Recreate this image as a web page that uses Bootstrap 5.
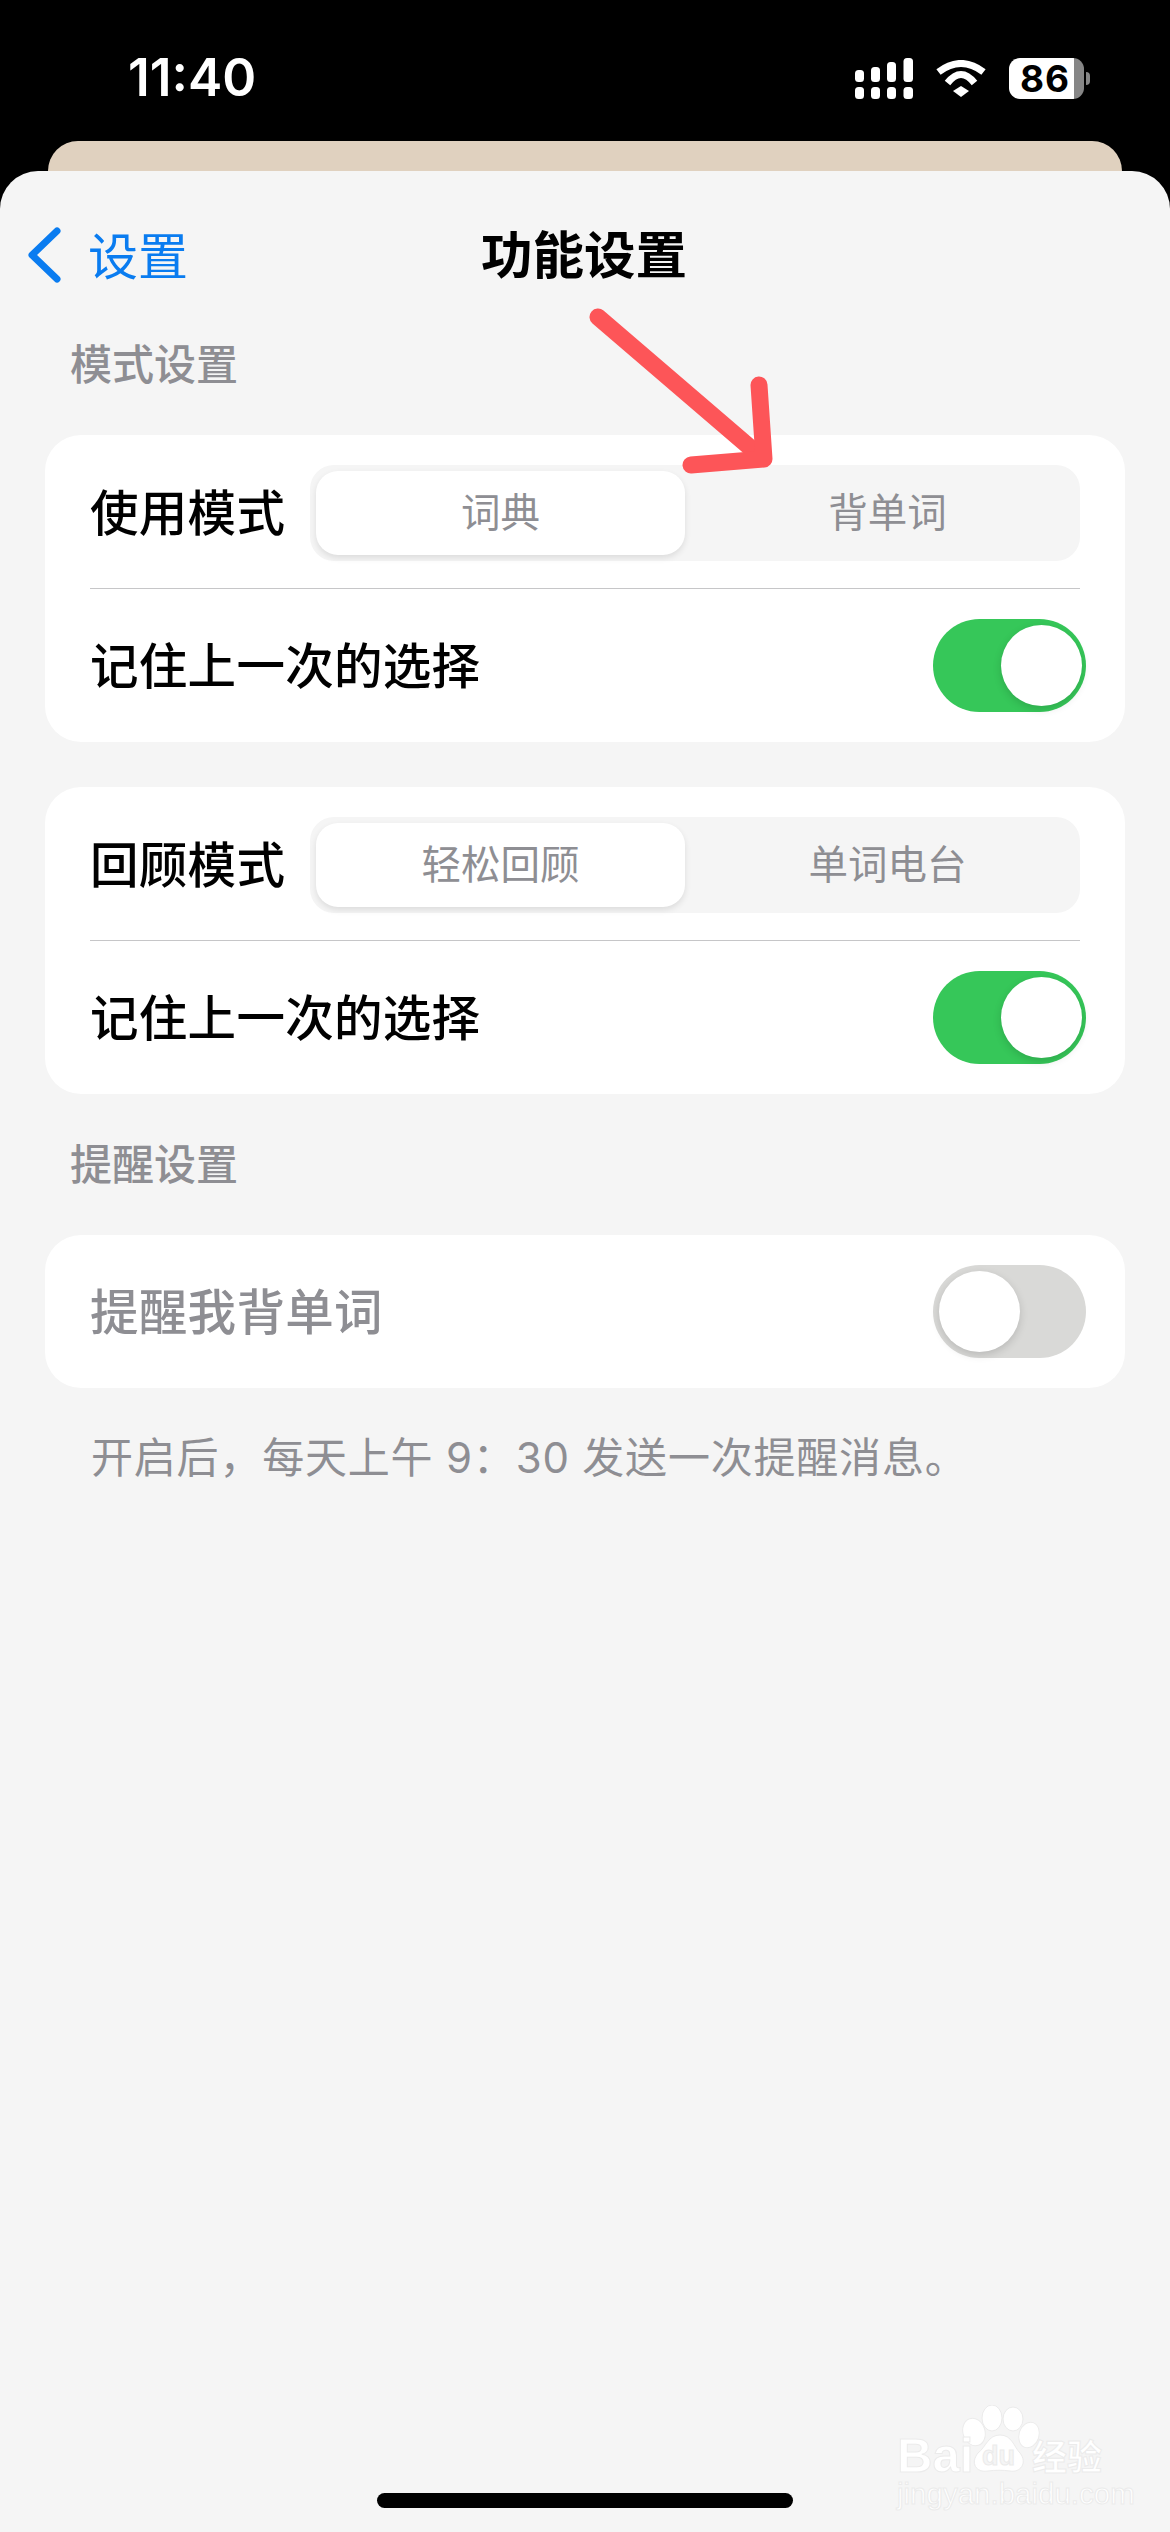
<!DOCTYPE html>
<html lang="zh-CN">
<head>
    <meta charset="UTF-8">
    <meta name="viewport" content="width=device-width, initial-scale=1.0">
    <title>功能设置</title>
    <link href="https://cdn.jsdelivr.net/npm/bootstrap@5.3.2/dist/css/bootstrap.min.css" rel="stylesheet">
    <style>
        body {
            background-color: #000;
            height: 2532px;
            font-family: "Noto Sans CJK SC", "Liberation Sans", sans-serif;
            overflow: hidden;
        }
        .status-bar {
            height: 141px;
            padding: 15px 86px 0 128px;
            color: #fff;
        }
        .status-time {
            font-family: Inter, "Liberation Sans", sans-serif;
            font-size: 51.5px;
            font-weight: 600;
            line-height: 1;
        }
        .status-icons { gap: 23px; }
        .battery {
            width: 75px;
            height: 41px;
            border-radius: 11px;
            background: linear-gradient(to right, #fff 65px, #868686 65px);
            color: #000;
            font-family: Inter, "Liberation Sans", sans-serif;
            font-size: 37px;
            font-weight: 700;
            line-height: 41px;
            padding-left: 11px;
            letter-spacing: 1px;
        }
        .battery::after {
            content: "";
            position: absolute;
            left: 77px;
            top: 14px;
            width: 4px;
            height: 13px;
            border-radius: 0 4px 4px 0;
            background: #868686;
        }
        .back-card {
            height: 30px;
            margin: 0 48px;
            background: #e0d1bf;
            border-radius: 30px 30px 0 0;
        }
        .sheet {
            height: 2361px;
            background: #f5f5f5;
            border-radius: 38px 38px 0 0;
        }
        .nav-row {
            height: 168px;
            grid-template-columns: 1fr auto 1fr;
            padding-left: 28px;
        }
        .back-link {
            gap: 27px;
            color: #0a7cf0;
            font-size: 50px;
            text-decoration: none;
            line-height: 1;
        }
        .back-link span { padding-bottom: 5px; }
        .page-title {
            font-size: 51.5px;
            font-weight: 700;
            line-height: 1;
            color: #000;
            margin-right: 30px;
            padding-bottom: 6px;
        }
        .group-title {
            height: 50px;
            line-height: 46px;
            margin: 0 0 46px 70px;
            font-size: 42px;
            font-weight: 500;
            color: #8e8e93;
        }
        .group-title.spaced { margin-top: 45px; }
        .set-card {
            margin: 0 45px;
            border: 0;
            border-radius: 36px;
            padding: 0 45px;
        }
        .set-card + .set-card { margin-top: 45px; }
        .set-row {
            height: 153px;
            font-size: 48.5px;
            font-weight: 500;
            line-height: 1;
            color: #000;
            letter-spacing: .3px;
        }
        .set-row > span { padding-bottom: 5px; }
        .set-row.seg-row { padding-top: 3px; }
        .set-row.muted-row { color: #8e8e93; }
        .set-line {
            height: 1px;
            background: #c6c6c8;
        }
        .seg-group {
            width: 770px;
            height: 96px;
            padding: 6px 6px;
            background: #f5f5f5;
            border-radius: 24px;
        }
        .seg-btn {
            flex: 1 1 0;
            border: 0;
            border-radius: 22px !important;
            padding: 0 0 6px 17px;
            font-size: 39.5px;
            line-height: 1;
            color: #8e8e93;
        }
        .seg-btn.selected {
            flex: 0 0 369px;
            padding-left: 0;
            background: #fff;
            color: #8e8e93;
            box-shadow: 0 3px 6px rgba(0,0,0,.1);
        }
        .sw-track {
            width: 153px;
            height: 93px;
            margin-right: -6px;
            border-radius: 47px;
            padding: 6px 4px 6px 6px;
            background: #d9d9d7;
        }
        .sw-track.on {
            background: #36c759;
            justify-content: flex-end;
        }
        .sw-knob {
            width: 81px;
            height: 81px;
            border-radius: 50%;
            background: #fff;
            box-shadow: 0 3px 8px rgba(0,0,0,.15);
        }
        .foot-note {
            height: 50px;
            line-height: 49px;
            margin: 45px 0 0 91px;
            font-family: Inter, "Noto Sans CJK SC", sans-serif;
            font-size: 42px;
            color: #8e8e93;
            letter-spacing: .8px;
        }
        .home-bar {
            width: 416px;
            height: 15px;
            margin-bottom: 24px;
            border-radius: 8px;
            background: #000;
        }
        /* red arrow drawn over the page */
        .red-arrow {
            position: absolute;
            left: 0;
            top: 0;
            pointer-events: none;
        }
        /* watermark, bottom right */
        .wm-box {
            position: absolute;
            left: 895px;
            top: 2405px;
            width: 214px;
            height: 102px;
            color: #fff;
            -webkit-text-stroke: 1px #ebebeb;
            line-height: 1;
            font-family: "Liberation Sans", sans-serif;
        }
        .wm-paw { position: absolute; left: 65px; top: 0; }
        .wm-bai {
            position: absolute;
            left: 2px;
            top: 26px;
            font-size: 49px;
            font-weight: 700;
        }
        .wm-du {
            position: absolute;
            left: 87px;
            top: 38px;
            font-size: 27px;
            font-weight: 700;
            color: #f5f5f5;
        }
        .wm-cn {
            position: absolute;
            left: 137px;
            top: 32px;
            font-family: "Noto Sans CJK SC", sans-serif;
            font-size: 35px;
            font-weight: 700;
        }
        .wm-url {
            position: absolute;
            left: 2px;
            top: 74px;
            font-size: 29.5px;
        }
    </style>
</head>
<body class="position-relative">
    <div class="status-bar d-flex justify-content-between align-items-center">
        <div class="status-time">11:40</div>
        <div class="status-icons d-flex align-items-center">
            <svg width="58" height="41" viewBox="0 0 58 41" fill="#fff">
                <rect x="0" y="12" width="9" height="12" rx="3.5"/>
                <rect x="16" y="9" width="9" height="15" rx="3.5"/>
                <rect x="32" y="4" width="9" height="20" rx="3.5"/>
                <rect x="48.500" y="0" width="9.500" height="24" rx="3.5"/>
                <rect x="0" y="29" width="9" height="12" rx="3.5"/>
                <rect x="16" y="29" width="9" height="12" rx="3.5"/>
                <rect x="32" y="29" width="9" height="12" rx="3.5"/>
                <rect x="48.500" y="29" width="9.500" height="12" rx="3.5"/>
            </svg>
            <svg width="50" height="37" viewBox="0 0 50 37" fill="none" stroke="#fff" stroke-width="7">
                <path d="M2.500 12Q25 -5 47.500 12"/>
                <path d="M11.500 23Q25 6 38.500 23"/>
                <path d="M17 31L25 26L33 31L25 37Z" fill="#fff" stroke="none"/>
            </svg>
            <div class="battery position-relative">86</div>
        </div>
    </div>
    <div class="back-card"></div>

    <div class="sheet d-flex flex-column">
        <div class="nav-row d-grid align-items-center">
            <a href="#" class="back-link d-flex align-items-center">
                <svg width="33" height="56" viewBox="0 0 33 56" fill="none" stroke="#0a7cf0" stroke-width="7" stroke-linecap="round" stroke-linejoin="round">
                    <path d="M29 4L4 28L29 52"/>
                </svg>
                <span>设置</span>
            </a>
            <div class="page-title">功能设置</div>
            <div></div>
        </div>

        <div class="group-title">模式设置</div>

        <div class="card set-card">
            <div class="set-row seg-row d-flex align-items-center justify-content-between">
                <span>使用模式</span>
                <div class="btn-group seg-group" role="group">
                    <button type="button" class="btn seg-btn selected">词典</button>
                    <button type="button" class="btn seg-btn">背单词</button>
                </div>
            </div>
            <div class="set-line"></div>
            <div class="set-row d-flex align-items-center justify-content-between">
                <span>记住上一次的选择</span>
                <div class="sw-track on d-flex"><span class="sw-knob"></span></div>
            </div>
        </div>

        <div class="card set-card">
            <div class="set-row seg-row d-flex align-items-center justify-content-between">
                <span>回顾模式</span>
                <div class="btn-group seg-group" role="group">
                    <button type="button" class="btn seg-btn selected">轻松回顾</button>
                    <button type="button" class="btn seg-btn">单词电台</button>
                </div>
            </div>
            <div class="set-line"></div>
            <div class="set-row d-flex align-items-center justify-content-between">
                <span>记住上一次的选择</span>
                <div class="sw-track on d-flex"><span class="sw-knob"></span></div>
            </div>
        </div>

        <div class="group-title spaced">提醒设置</div>

        <div class="card set-card">
            <div class="set-row muted-row d-flex align-items-center justify-content-between">
                <span>提醒我背单词</span>
                <div class="sw-track d-flex"><span class="sw-knob"></span></div>
            </div>
        </div>

        <div class="foot-note">开启后，每天上午 9：30 发送一次提醒消息。</div>

        <div class="home-bar mt-auto mx-auto"></div>
    </div>

    <svg class="red-arrow" width="1170" height="500" viewBox="0 0 1170 500" fill="none" stroke="#fd5558" stroke-width="17" stroke-linecap="round" stroke-linejoin="round">
        <path d="M598 317L760 456"/>
        <path d="M759 385L764 459L691 465"/>
    </svg>

    <div class="wm-box">
        <svg class="wm-paw" width="86" height="70" viewBox="0 0 86 70" fill="#fff" stroke="#ebebeb" stroke-width="1">
            <ellipse cx="14" cy="27" rx="11" ry="14" transform="rotate(-18 14 27)"/>
            <ellipse cx="32" cy="13" rx="10" ry="13"/>
            <ellipse cx="53" cy="14" rx="10" ry="12"/>
            <ellipse cx="69" cy="30" rx="10" ry="13" transform="rotate(18 69 30)"/>
            <path d="M40 30C52 30 54 42 60 48C68 58 60 68 50 66C42 65 36 65 28 66C16 68 10 58 18 48C26 42 28 30 40 30Z"/>
        </svg>
        <span class="wm-bai">Bai</span>
        <span class="wm-du">du</span>
        <span class="wm-cn">经验</span>
        <span class="wm-url">jingyan.baidu.com</span>
    </div>
</body>
</html>
